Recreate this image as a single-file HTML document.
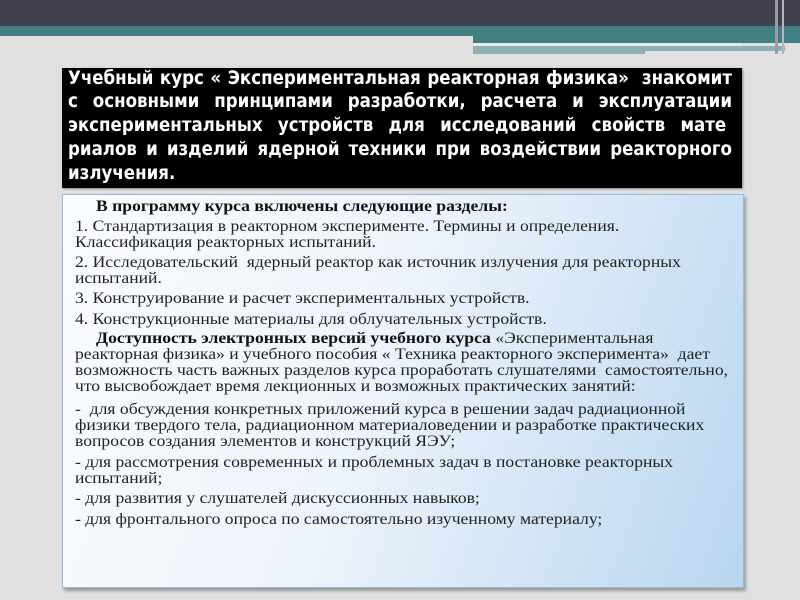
<!DOCTYPE html>
<html><head><meta charset="utf-8"><style>
*{margin:0;padding:0}
body{width:800px;height:600px;background:#e0e0e0;position:relative;overflow:hidden}
.a{position:absolute}
#blk{left:62px;top:68px;width:680px;height:120px;background:#000;box-shadow:1px 1px 2px #888}
.t{position:absolute;left:68px;width:664px;color:#fff;font-family:"DejaVu Sans Condensed","DejaVu Sans",sans-serif;font-weight:bold;font-size:18.5px;line-height:20px;font-stretch:condensed;text-align:justify;text-align-last:justify;white-space:nowrap}
#blue{left:62px;top:194px;width:680px;height:392px;background:linear-gradient(110deg,#fafcfe 0%,#eef4fb 45%,#b9d6f0 100%);border:1px solid #9bb8d6;box-shadow:2px 3px 3px #999}
.l{position:absolute;left:75px;font:16px/18px "Liberation Serif",serif;color:#222;white-space:nowrap;transform:scaleX(1.1);transform-origin:0 0}
b{color:#111}
</style></head><body>
<div class="a" style="left:0;top:0;width:800px;height:26px;background:#40404f"></div>
<div class="a" style="left:0;top:26px;width:800px;height:10px;background:#417f82"></div>
<div class="a" style="left:473px;top:36px;width:327px;height:7px;background:#417f82"></div>
<div class="a" style="left:473px;top:43px;width:268px;height:3px;background:#e6eeee"></div>
<div class="a" style="left:473px;top:46px;width:172px;height:8px;background:#8fb1b3"></div>
<div class="a" style="left:645px;top:46px;width:140px;height:5px;background:#8fb1b3"></div>
<div class="a" style="left:775px;top:0;width:3px;height:54px;background:#9a9aa8"></div>
<div class="a" style="left:782px;top:0;width:2px;height:54px;background:#b5b5c0"></div>
<div class="a" id="blk"></div>
<div class="t" style="top:69px">Учебный курс « Экспериментальная реакторная физика»&nbsp; знакомит</div>
<div class="t" style="top:92px">с основными принципами разработки, расчета и эксплуатации</div>
<div class="t" style="top:116px">экспериментальных устройств для исследований свойств мате&nbsp;</div>
<div class="t" style="top:140px">риалов и изделий ядерной техники при воздействии реакторного</div>
<div class="t" style="top:164px;text-align-last:left">излучения.</div>
<div class="a" id="blue"></div>
<div class="l" style="top:198px;left:96px"><b>В программу курса включены следующие разделы:</b></div>
<div class="l" style="top:218px">1. Стандартизация в реакторном эксперименте. Термины и определения.</div>
<div class="l" style="top:234px">Классификация реакторных испытаний.</div>
<div class="l" style="top:254px">2. Исследовательский&nbsp; ядерный реактор как источник излучения для реакторных</div>
<div class="l" style="top:270px">испытаний.</div>
<div class="l" style="top:290px">3. Конструирование и расчет экспериментальных устройств.</div>
<div class="l" style="top:311px">4. Конструкционные материалы для облучательных устройств.</div>
<div class="l" style="top:330px;left:96px"><b>Доступность электронных версий учебного курса</b> «Экспериментальная</div>
<div class="l" style="top:346px">реакторная физика» и учебного пособия « Техника реакторного эксперимента»&nbsp; дает</div>
<div class="l" style="top:362px">возможность часть важных разделов курса проработать слушателями&nbsp; самостоятельно,</div>
<div class="l" style="top:378px">что высвобождает время лекционных и возможных практических занятий:</div>
<div class="l" style="top:401px">-&nbsp; для обсуждения конкретных приложений курса в решении задач радиационной</div>
<div class="l" style="top:417px">физики твердого тела, радиационном материаловедении и разработке практических</div>
<div class="l" style="top:433px">вопросов создания элементов и конструкций ЯЭУ;</div>
<div class="l" style="top:454px">- для рассмотрения современных и проблемных задач в постановке реакторных</div>
<div class="l" style="top:470px">испытаний;</div>
<div class="l" style="top:490px">- для развития у слушателей дискуссионных навыков;</div>
<div class="l" style="top:511px">- для фронтального опроса по самостоятельно изученному материалу;</div>
</body></html>
